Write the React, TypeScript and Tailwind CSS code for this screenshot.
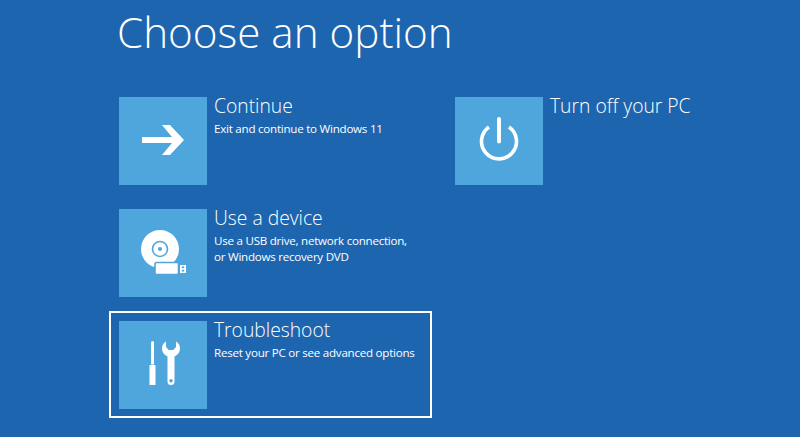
const options = [
  {
    title: "Continue",
    desc: ["Exit and continue to Windows 11"],
    icon: "arrow",
  },
  {
    title: "Turn off your PC",
    desc: [],
    icon: "power",
  },
  {
    title: "Use a device",
    desc: ["Use a USB drive, network connection,", "or Windows recovery DVD"],
    icon: "device",
  },
  null,
  {
    title: "Troubleshoot",
    desc: ["Reset your PC or see advanced options"],
    icon: "tools",
    selected: true,
  },
]

function Icon({ name }: { name: string }) {
  if (name === "arrow") {
    return (
      <svg width="88" height="88" viewBox="0 0 88 88" fill="white">
        <rect x="23" y="40" width="36" height="6" />
        <path d="M43 28H51L65 43L51 58H43L55.5 43Z" />
      </svg>
    )
  }
  if (name === "power") {
    return (
      <svg width="88" height="88" viewBox="0 0 88 88" fill="none" stroke="white">
        <path d="M34 30A17.5 17.5 0 1 0 54 30" strokeWidth="3.6" />
        <path d="M44 22V44.5" strokeWidth="4" strokeLinecap="round" />
      </svg>
    )
  }
  if (name === "device") {
    return (
      <svg width="88" height="88" viewBox="0 0 88 88">
        <circle cx="41" cy="40" r="19" fill="white" />
        <circle cx="41" cy="40" r="7.5" fill="none" stroke="#4ea6dc" strokeWidth="1.6" />
        <circle cx="41" cy="40" r="2" fill="#4ea6dc" />
        <rect x="36" y="53.5" width="23.5" height="12" rx="1.5" fill="white" stroke="#4ea6dc" strokeWidth="1.6" />
        <rect x="61" y="56" width="6" height="8" fill="white" />
        <rect x="62.8" y="57.4" width="2.4" height="1.7" fill="#4ea6dc" />
        <rect x="62.8" y="60.8" width="2.4" height="1.7" fill="#4ea6dc" />
      </svg>
    )
  }
  return (
    <svg width="88" height="88" viewBox="0 0 88 88" fill="white">
      <path d="M32 21.5Q32 20 33.5 20Q35 20 35 21.5V43.5H32Z" />
      <path d="M30.5 44H36.5V63.5Q36.5 64 36 64H31Q30.5 64 30.5 63.5Z" />
      <path
        fillRule="evenodd"
        d="M47 20.5V26L49.7 29H54.3L57 26V20.5C60 22 61 25 61 27.5C61 31 59 34 55.5 35.5V60.5A3.5 3.5 0 0 1 48.5 60.5V35.5C45 34 43 31 43 27.5C43 25 44 22 47 20.5ZM52 58A1.7 1.7 0 1 0 52 61.4A1.7 1.7 0 1 0 52 58Z"
      />
    </svg>
  )
}

export default function App() {
  return (
    <div className="h-[437px] w-[800px] overflow-hidden bg-[#1e65b0] pl-[109px] font-['Open_Sans',sans-serif] text-white">
      <h1 className="ml-[8px] h-[85px] pt-[3px] text-[42.2px] leading-[58px] font-light">Choose an option</h1>
      <div className="grid grid-cols-[323px_322px] gap-x-[13px] gap-y-[5px] pt-[2px]">
        {options.map((opt, i) =>
          opt ? (
            <div
              key={i}
              className={
                opt.selected
                  ? "flex h-[107px] gap-[7px] border-2 border-white p-[8px]"
                  : "flex h-[107px] gap-[7px] border-2 border-transparent p-[8px]"
              }
            >
              <div className="h-[88px] w-[88px] shrink-0 bg-[#4ea6dc]">
                <Icon name={opt.icon} />
              </div>
              <div className="whitespace-nowrap">
                <div className="text-[19.3px] leading-[17px] font-light">{opt.title}</div>
                <div className="mt-[7px] text-[11.6px] leading-[16px] tracking-[-0.25px]">
                  {opt.desc.map((line) => (
                    <div key={line}>{line}</div>
                  ))}
                </div>
              </div>
            </div>
          ) : (
            <div key={i} />
          ),
        )}
      </div>
    </div>
  )
}
